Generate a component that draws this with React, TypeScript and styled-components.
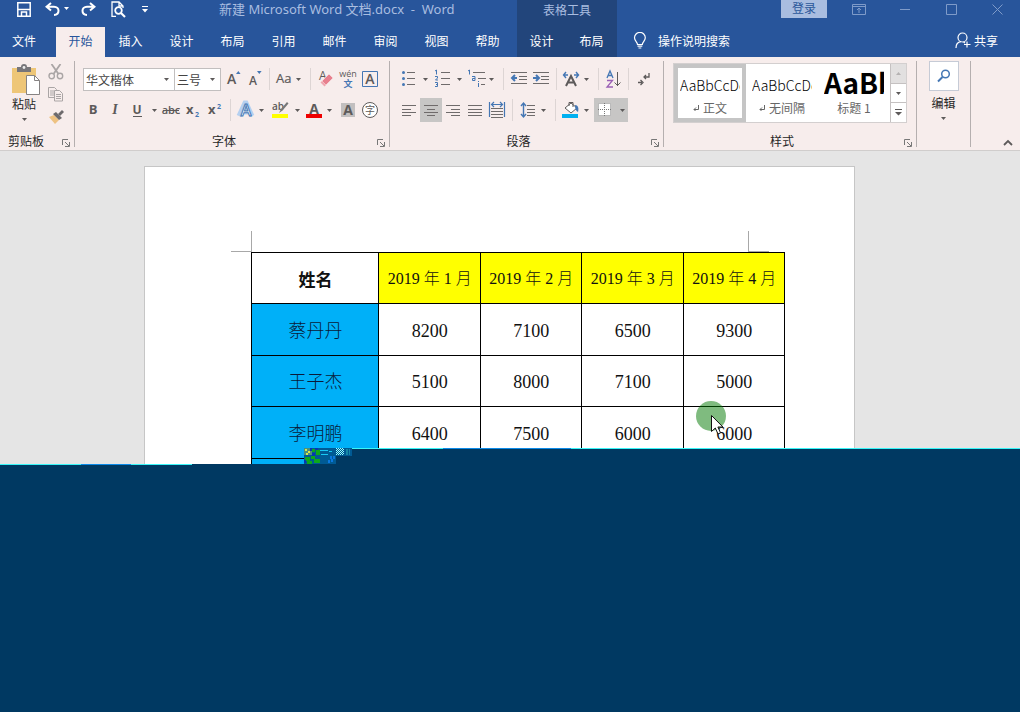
import React from "react";
import styled, { createGlobalStyle, css } from "styled-components";

const ui = `"Open Sans", "Noto Sans CJK SC", sans-serif`;
const cjk = `"Noto Sans CJK SC", sans-serif`;
const doc = `"Liberation Serif", "KaiTi", "Noto Sans CJK SC", serif`;

const c = {
  blue: "#28559b",
  deep: "#22457b",
  pale: "#a9bde0",
  ribbon: "#f7edec",
  ink: "#5d5a5a",
  accent: "#4577b4",
  navy: "#003962",
  cyan: "#38f6f8",
};

const Global = createGlobalStyle`
  * { box-sizing: border-box; }
  body { margin: 0; font-family: ${ui}; font-size: 12px; color: #262626; }
  button, input, select { font: inherit; color: inherit; background: none; border: 0; padding: 0; margin: 0; }
  button { cursor: default; }
  svg { display: block; flex: none; }
`;

const Shell = styled.div`
  min-height: 100vh;
  display: flex;
  flex-direction: column;
  overflow: hidden;
  background: ${c.navy};
`;

/* ---------- header ---------- */
const Header = styled.header`
  display: grid;
  grid-template-columns: auto auto 1fr;
  background: ${c.blue};
  color: #fff;
`;
const HeaderPart = styled.div<{ $context?: boolean; $gap?: number }>`
  display: flex;
  flex-direction: column;
  background: ${(p) => (p.$context ? c.deep : "transparent")};
  padding-right: ${(p) => p.$gap || 0}px;
`;
const TitleBar = styled.div<{ $align?: string }>`
  display: flex;
  align-items: center;
  justify-content: ${(p) => p.$align || "flex-start"};
  height: 18px;
  margin-bottom: 9px;
  white-space: nowrap;
`;
const QuickAccess = styled.div`
  display: flex;
  align-items: center;
  padding-left: 8px;
  width: 219px;
`;
const QuickButton = styled.button<{ $w: number }>`
  width: ${(p) => p.$w}px;
  height: 20px;
  display: flex;
  align-items: center;
  justify-content: center;
`;
const Title = styled.h1`
  margin: 0;
  font-size: 12px;
  font-weight: 400;
  font-family: "DejaVu Sans", ${cjk};
  font-family: "Noto Sans", ${cjk};
  font-size: 13px;
  line-height: 18px;
  color: ${c.pale};
  white-space: pre;
`;
const ContextTitle = styled.span`
  color: ${c.pale};
  font-family: ${cjk};
`;
const TabBar = styled.nav`
  display: flex;
  height: 30px;
`;
const Tab = styled.button<{ $active?: boolean; $w?: number }>`
  width: ${(p) => p.$w || 51}px;
  height: 30px;
  padding-bottom: 3px;
  font-family: ${cjk};
  text-align: center;
  ${(p) => p.$active && css`background: ${c.ribbon}; color: ${c.blue};`}
`;
const FileTab = styled(Tab)`
  padding-right: 8px;
`;
const SignIn = styled.button`
  width: 46px;
  height: 18px;
  margin-right: 9px;
  line-height: 18px;
  background: ${c.pale};
  color: #2b579a;
`;
const WindowButton = styled.button`
  width: 46px;
  height: 18px;
  display: flex;
  align-items: center;
  justify-content: center;
`;
const ToolRow = styled.div`
  display: flex;
  align-items: center;
  justify-content: space-between;
  height: 30px;
  padding: 0 22px 3px 16px;
`;
const Search = styled.label`
  display: flex;
  align-items: center;
  gap: 11px;
  input {
    width: 120px;
    outline: 0;
    font-family: ${cjk};
  }
  input::placeholder { color: #fff; opacity: 1; }
`;
const Share = styled.button`
  display: flex;
  align-items: center;
  gap: 3px;
  font-family: ${cjk};
`;

/* ---------- ribbon ---------- */
const Ribbon = styled.section`
  display: flex;
  padding: 4px 0 3px;
  background: ${c.ribbon};
  border-bottom: 1px solid #d0cdcc;
`;
const Group = styled.div<{ $w: number }>`
  position: relative;
  width: ${(p) => p.$w}px;
  height: 86px;
  display: flex;
  flex-direction: column;
  border-right: 1px solid #b5afaf;
`;
const GroupBody = styled.div<{ $pad?: number }>`
  flex: 1;
  padding-left: ${(p) => p.$pad ?? 7}px;
`;
const GroupLabel = styled.div<{ $pad?: number }>`
  height: 14px;
  line-height: 16px;
  padding-right: ${(p) => p.$pad ?? 16}px;
  text-align: center;
  font-family: ${cjk};
`;
const Launcher = styled.button`
  position: absolute;
  right: 4px;
  bottom: 0;
`;
const Row = styled.div<{ $first?: boolean }>`
  display: flex;
  align-items: center;
  height: 24px;
  margin-top: ${(p) => (p.$first ? 6 : 7)}px;
  padding-left: ${(p) => (p.$first ? 1 : 0)}px;
`;
const ParaRow = styled(Row)`
  padding-left: ${(p) => (p.$first ? 0 : 1)}px;
`;
const Combo = styled.label<{ $w: number }>`
  position: relative;
  display: flex;
  align-items: center;
  width: ${(p) => p.$w}px;
  height: 23px;
  background: #fff;
  border: 1px solid #c2bfbf;
  margin-right: ${(p) => (p.$w > 60 ? -1 : 1)}px;
  select {
    flex: 1;
    min-width: 0;
    appearance: none;
    outline: 0;
    padding-left: 2px;
    font-family: ${cjk};
    color: #444;
  }
  svg { position: absolute; right: 5px; }
`;
const Tool = styled.button<{ $on?: boolean }>`
  display: flex;
  align-items: center;
  height: 24px;
  background: ${(p) => (p.$on ? "#c7c6c5" : "transparent")};
`;
const CaretBox = styled.span<{ $tight?: boolean }>`
  width: ${(p) => (p.$tight ? 10 : 12)}px;
  display: flex;
  justify-content: ${(p) => (p.$tight ? "flex-start" : "center")};
`;
const Divider = styled.span<{ $w?: number }>`
  width: ${(p) => p.$w || 9}px;
  height: 22px;
  background: linear-gradient(#ddd5d4, #ddd5d4) center / 1px 100% no-repeat;
`;
const ClipBody = styled.div`
  flex: 1;
  display: flex;
  padding: 3px 0 0 8px;
`;
const BigButton = styled.button`
  width: 32px;
  display: flex;
  flex-direction: column;
  align-items: center;
  line-height: 16px;
  font-family: ${cjk};
  white-space: nowrap;
`;
const PasteArt = styled.span`
  height: 32px;
  margin-left: 4px;
`;
const BigCaret = styled.span`
  margin-top: 6px;
`;
const SmallStack = styled.div`
  display: flex;
  flex-direction: column;
  width: 32px;
  align-items: center;
`;
const SmallButton = styled.button<{ $h: number }>`
  height: ${(p) => p.$h}px;
  display: flex;
  align-items: flex-start;
`;
const Gallery = styled.div`
  display: flex;
  width: 234px;
  height: 60px;
  margin-top: 2px;
  background: #fff;
  border: 1px solid #d3cfcf;
`;
const StyleCard = styled.button<{ $on?: boolean }>`
  width: 72px;
  height: 58px;
  border: 4px solid ${(p) => (p.$on ? "#c5c5c5" : "#fff")};
  padding: 0 2px;
  display: flex;
  flex-direction: column;
  font-family: ${cjk};
`;
const Sample = styled.span<{ $big?: boolean }>`
  width: 60px;
  height: 32px;
  overflow: hidden;
  white-space: nowrap;
  text-align: left;
  line-height: ${(p) => (p.$big ? 28 : 34)}px;
  font-size: ${(p) => (p.$big ? 28 : 14)}px;
  font-weight: ${(p) => (p.$big ? 700 : 300)};
  color: #000;
`;
const StyleName = styled.span`
  width: 60px;
  display: flex;
  align-items: center;
  justify-content: center;
  gap: 4px;
  line-height: 16px;
  color: #666;
  white-space: nowrap;
`;
const GalleryScroll = styled.div`
  flex: 1;
  display: flex;
  flex-direction: column;
  border-left: 1px solid #c5c1c1;
`;
const ScrollButton = styled.button<{ $off?: boolean }>`
  flex: 1;
  display: flex;
  align-items: center;
  justify-content: center;
  background: ${(p) => (p.$off ? "#e2e0e0" : "#fff")};
  & + & { border-top: 1px solid #c5c1c1; }
`;
const EditBody = styled.div`
  flex: 1;
  display: flex;
  justify-content: center;
`;
const FindArt = styled.span`
  width: 30px;
  height: 30px;
  display: flex;
  align-items: center;
  justify-content: center;
  background: #fff;
  border: 1px solid #c6cbd6;
  margin-bottom: 4px;
`;
const Rest = styled.div`
  flex: 1;
  display: flex;
  align-items: flex-end;
  justify-content: flex-end;
  padding-right: 7px;
`;

/* ---------- document ---------- */
const Workspace = styled.main`
  position: relative;
  height: 313px;
  overflow: hidden;
  display: flex;
  justify-content: center;
  align-items: flex-start;
  padding: 15px 21px 0 0;
  background: #e5e5e5;
`;
const Page = styled.article`
  position: relative;
  width: 711px;
  height: 900px;
  padding: 64px 69px 0 86px;
  background: #fff;
  border: 1px solid #c6c6c6;
`;
const Margins = styled.div`
  display: flex;
  justify-content: space-between;
  width: 538px;
`;
const MarginMark = styled.span<{ $right?: boolean }>`
  width: 21px;
  height: 21px;
  border: 0 solid #a8a8a8;
  border-bottom-width: 1px;
  ${(p) => (p.$right ? "border-left-width: 1px;" : "border-right-width: 1px;")}
`;
const Sheet = styled.table`
  width: 534px;
  margin-left: 20px;
  table-layout: fixed;
  border-collapse: collapse;
  font-family: ${doc};
  font-size: 18px;
  line-height: 24px;
  color: #111;
  text-align: center;
  th, td { border: 1px solid #000; padding: 2px 2px 0 3px; height: 51px; white-space: nowrap; }
  tbody tr:nth-child(odd) > * { height: 52px; }
`;
const Month = styled.th`
  background: #ff0;
  font-size: 16px;
  font-weight: 300;
`;
const NameHead = styled.th`
  width: 127px;
  font-family: ${cjk};
  font-size: 17px;
  font-weight: 700;
`;
const Name = styled.th`
  background: #00b0f8;
  font-weight: 300;
  color: #0a1a38;
`;
const Pointer = styled.span`
  position: absolute;
  left: 551px;
  top: 234px;
`;
const BlankStep = styled.div`
  position: absolute;
  left: 304px;
  right: 0;
  bottom: 0;
  height: 16px;
  background: ${c.navy};
  overflow: hidden;
`;
const Edge = styled.div`
  display: flex;
  height: 1px;
`;
const EdgeRun = styled.span<{ $w?: number; $c: string }>`
  ${(p) => (p.$w ? `width: ${p.$w}px;` : "flex: 1;")}
  background: ${(p) => p.$c};
`;
const Noise = styled.span`
  position: absolute;
  left: 0;
  top: 0;
`;
const Blank = styled.footer`
  flex: 1;
  background: ${c.navy};
`;

/* ---------- icons ---------- */
const Caret = ({ fill = c.ink }: { fill?: string }) => (
  <svg width="5" height="3" viewBox="0 0 5 3"><path d="M0 0h5L2.500 3z" fill={fill} /></svg>
);
const Ret = () => (
  <svg width="6" height="6" viewBox="0 0 6 6" fill="none" stroke="#666"><path d="M5.500 0v4.500H1M3 2.500l-2 2 2 2" /></svg>
);
const Ico = ({ w = 22, children }: { w?: number; children: React.ReactNode }) => (
  <svg width={w} height="24" viewBox={`0 0 ${w} 24`} fill="none" fontFamily="Open Sans">{children}</svg>
);
type ToolProps = { label: string; caret?: boolean; tight?: boolean; on?: boolean; w?: number; children: React.ReactNode };
const T = ({ label, caret, tight, on, w, children }: ToolProps) => (
  <Tool aria-label={label} $on={on}>
    <Ico w={w}>{children}</Ico>
    {caret && <CaretBox $tight={tight}><Caret /></CaretBox>}
  </Tool>
);
const Launch = ({ label }: { label: string }) => (
  <Launcher aria-label={label}>
    <svg width="8" height="8" viewBox="0 0 8 8" fill="none" stroke="#777"><path d="M.5 6V.5H6" /><path d="M3 3l4 4" /><path d="M7.500 3v4.500H3" /></svg>
  </Launcher>
);
const Lines = ({ x, rows }: { x: number; rows: [number, number, number][] }) => (
  <path stroke="#6f6b6b" d={rows.map(([a, b, y]) => `M${x + a} ${y + 0.5}h${b}`).join("")} />
);

const months = ["1", "2", "3", "4"];
const people = [
  { name: "蔡丹丹", pay: [8200, 7100, 6500, 9300] },
  { name: "王子杰", pay: [5100, 8000, 7100, 5000] },
  { name: "李明鹏", pay: [6400, 7500, 6000, 6000] },
  { name: "", pay: ["", "", "", ""] },
];
const tabs = ["插入", "设计", "布局", "引用", "邮件", "审阅", "视图", "帮助"];

export default function App() {
  return (
    <Shell>
      <Global />
      <Header>
        <HeaderPart $gap={4}>
          <TitleBar>
            <QuickAccess>
              <QuickButton $w={32} aria-label="保存">
                <svg width="14" height="15" viewBox="0 0 14 15" fill="none" stroke="#fff" strokeWidth="1.500"><path d="M.8 .8h12.400v13.400H.8zM1 7.500h12M4.500 14v-4h5v4" /></svg>
              </QuickButton>
              <QuickButton $w={34} aria-label="撤消">
                <svg width="24" height="14" viewBox="0 0 24 14" fill="none" stroke="#fff" strokeWidth="2"><path d="M6 1L1.500 4.800 6 8.500M2 4.800h7c6 0 6 8 0 8.200" /><path d="M19 5h5l-2.500 3z" fill="#fff" stroke="none" /></svg>
              </QuickButton>
              <QuickButton $w={28} aria-label="恢复">
                <svg width="15" height="14" viewBox="0 0 15 14" fill="none" stroke="#fff" strokeWidth="2"><path d="M9 1l4.500 3.800L9 8.500M13 4.800H6c-6 0-6 8 0 8.200" /></svg>
              </QuickButton>
              <QuickButton $w={32} aria-label="打印预览">
                <svg width="15" height="17" viewBox="0 0 15 17" fill="none" stroke="#fff" strokeWidth="1.300"><path d="M5 15.300H1V1h7l4 4v2M8 1v4h4" /><circle cx="7.500" cy="9.500" r="3.300" strokeWidth="1.800" /><path d="M10 12l4 4" strokeWidth="2.200" /></svg>
              </QuickButton>
              <QuickButton $w={22} aria-label="自定义快速访问工具栏">
                <svg width="6" height="7" viewBox="0 0 6 7" fill="#fff"><path d="M0 0h6v1H0zM0 3h6L3 6.500z" /></svg>
              </QuickButton>
            </QuickAccess>
            <Title>新建 Microsoft Word 文档.docx  -  Word</Title>
          </TitleBar>
          <TabBar>
            <FileTab $w={56}>文件</FileTab>
            <Tab $w={49} $active>开始</Tab>
            {tabs.map((t) => <Tab key={t}>{t}</Tab>)}
          </TabBar>
        </HeaderPart>
        <HeaderPart $context>
          <TitleBar $align="center"><ContextTitle>表格工具</ContextTitle></TitleBar>
          <TabBar><Tab $w={49}>设计</Tab><Tab>布局</Tab></TabBar>
        </HeaderPart>
        <HeaderPart>
          <TitleBar $align="flex-end">
            <SignIn>登录</SignIn>
            <WindowButton aria-label="功能区显示选项">
              <svg width="14" height="11" viewBox="0 0 14 11" fill="none" stroke="#7f9bc9"><path d="M.5 .5h13v10H.5zM1 2.500h12M7 9V4M5 6l2-2 2 2" /></svg>
            </WindowButton>
            <WindowButton aria-label="最小化">
              <svg width="10" height="10" viewBox="0 0 10 10" stroke="#7f9bc9"><path d="M0 5.500h10" /></svg>
            </WindowButton>
            <WindowButton aria-label="最大化">
              <svg width="11" height="11" viewBox="0 0 11 11" fill="none" stroke="#7f9bc9"><path d="M.5 .5h10v10H.5z" /></svg>
            </WindowButton>
            <WindowButton aria-label="关闭">
              <svg width="11" height="11" viewBox="0 0 11 11" stroke="#7f9bc9"><path d="M.5 .5l10 10M10.500 .5l-10 10" /></svg>
            </WindowButton>
          </TitleBar>
          <ToolRow>
            <Search>
              <svg width="14" height="17" viewBox="0 0 14 17" fill="none" stroke="#fff" strokeWidth="1.200"><path d="M4.500 12.500c0-2.500-3-3.500-3-6.700a5.400 5.400 0 0 1 10.800 0c0 3.200-3 4.200-3 6.700zM4.500 14.200h4.800M5.500 16h2.800" /></svg>
              <input aria-label="操作说明搜索" placeholder="操作说明搜索" />
            </Search>
            <Share>
              <svg width="16" height="17" viewBox="0 0 16 17" fill="none" stroke="#fff" strokeWidth="1.200"><circle cx="7.500" cy="5.500" r="4.500" /><path d="M1 16c0-4 2-6 5-6.300M8.500 10l1.500 1M12 9.500v6M9 12.500h6.500" /></svg>
              共享
            </Share>
          </ToolRow>
        </HeaderPart>
      </Header>

      <Ribbon>
        <Group $w={75}>
          <ClipBody>
            <BigButton>
              <PasteArt>
                <svg width="28" height="31" viewBox="0 0 28 31"><path d="M0 4h24v25H0z" fill="#eec677" /><path d="M5 3h4a3 3 0 0 1 6 0h4v5H5z" fill="#77767a" /><circle cx="12" cy="3.500" r="1.400" fill="#eee" /><path d="M14.500 11.500h8l5 5v14h-13z" fill="#fff" stroke="#868383" /><path d="M22.500 11.500v5h5" fill="none" stroke="#868383" /></svg>
              </PasteArt>
              粘贴
              <BigCaret><Caret /></BigCaret>
            </BigButton>
            <SmallStack>
              <SmallButton $h={23} aria-label="剪切">
                <svg width="16" height="16" viewBox="0 0 16 16" fill="none" stroke="#aaa5a5" strokeWidth="1.400"><path d="M3.500 0l7 10M12.500 0l-7 10" strokeWidth="1.800" /><circle cx="3.700" cy="12" r="2.700" /><circle cx="12" cy="12" r="2.700" /></svg>
              </SmallButton>
              <SmallButton $h={23} aria-label="复制">
                <svg width="16" height="15" viewBox="0 0 16 15" fill="#f7edec" stroke="#aaa5a5"><path d="M.5 .5h6l2 2v8h-8zM2 4h4M2 6h4M2 8h4" /><path d="M6.500 3.500h5l3 3v7.500h-8zM8 7.500h5M8 9.500h5M8 11.500h5" /></svg>
              </SmallButton>
              <SmallButton $h={16} aria-label="格式刷">
                <svg width="16" height="14" viewBox="0 0 16 14"><path d="M1 7l5-2 5 5-4 4z" fill="#eec282" /><path d="M5 4l3-2 6 6-3 2z" fill="#6d6a6c" /><path d="M10 4l4-4 2 2-4 4z" fill="#6d6a6c" /></svg>
              </SmallButton>
            </SmallStack>
          </ClipBody>
          <GroupLabel $pad={22}>剪贴板</GroupLabel>
          <Launch label="剪贴板选项" />
        </Group>

        <Group $w={315}>
          <GroupBody>
            <Row $first>
              <Combo $w={92}><select aria-label="字体"><option>华文楷体</option></select><Caret /></Combo>
              <Combo $w={47}><select aria-label="字号"><option>三号</option></select><Caret /></Combo>
              <T label="增大字号"><text x="5" y="17" fontSize="14" fontWeight="600" fill={c.ink}>A</text><path d="M14 7l2.300-3 2.300 3z" fill={c.accent} /></T>
              <T label="减小字号"><text x="5" y="18" fontSize="12" fontWeight="600" fill={c.ink}>A</text><path d="M13 4h4.600l-2.300 3z" fill={c.accent} /></T>
              <Divider $w={6} />
              <T label="更改大小写" caret tight w={24}><text x="4" y="16" fontSize="13" fill={c.ink} stroke={c.ink} strokeWidth=".2">Aa</text></T>
              <Divider />
              <T label="清除所有格式"><text x="4" y="13" fontSize="12" fill={c.ink}>A</text><path d="M7 14l7-7 4 4-7 7z" fill="#e8808e" stroke="#f7edec" strokeWidth=".6" /><path d="M7 14l4 4-1.500 1.500-4-4z" fill="#efa5ae" /></T>
              <T label="拼音指南"><text x="11" y="10" fontSize="9" fill={c.ink} textAnchor="middle">wén</text><text x="11" y="20" fontSize="9" fontWeight="700" fontFamily="Noto Sans CJK SC" fill={c.accent} textAnchor="middle">文</text></T>
              <T label="字符边框"><path d="M3.500 4.500h15v15h-15z" stroke={c.accent} /><text x="11" y="17" fontSize="14" fontWeight="600" fill={c.ink} textAnchor="middle">A</text></T>
            </Row>
            <Row>
              <T label="加粗"><text x="11" y="16" fontSize="13" fontWeight="700" fill={c.ink} textAnchor="middle">B</text></T>
              <T label="倾斜"><text x="11" y="16" fontSize="14" fontWeight="600" fontStyle="italic" fontFamily="Liberation Serif" fill={c.ink} textAnchor="middle">I</text></T>
              <T label="下划线" caret><text x="11" y="16" fontSize="12" fontWeight="700" fill={c.ink} textAnchor="middle">U</text><path d="M7 18.500h9" stroke={c.ink} /></T>
              <T label="删除线"><text x="11" y="16" fontSize="11" fontWeight="600" fill={c.ink} textAnchor="middle">abc</text><path d="M3 12.500h16" stroke={c.ink} /></T>
              <T label="下标"><text x="4" y="16" fontSize="13" fontWeight="700" fill={c.ink}>x</text><text x="13" y="19" fontSize="7" fontWeight="700" fill={c.accent}>2</text></T>
              <T label="上标"><text x="4" y="16" fontSize="13" fontWeight="700" fill={c.ink}>x</text><text x="13" y="11" fontSize="7" fontWeight="700" fill={c.accent}>2</text></T>
              <Divider />
              <T label="文本效果" caret tight w={24}><path d="M4 18L10 5h1l6 13M7 14h7" stroke="#b5d0f0" strokeWidth="5" /><text x="11" y="18" fontSize="16" fontWeight="600" fill="#fff" stroke={c.accent} strokeWidth="1" textAnchor="middle">A</text></T>
              <T label="文本突出显示颜色" caret><text x="3" y="12" fontSize="10" fontWeight="600" fill={c.ink}>ab</text><path d="M10 15l2-4 6-7 1.500 1.500-6 7z" fill="#777" /><path d="M3 16h16v4H3z" fill="#ff0" /></T>
              <T label="字体颜色" caret tight w={24}><text x="11" y="16" fontSize="14" fontWeight="700" fill={c.ink} textAnchor="middle">A</text><path d="M3 16h16v4H3z" fill="#e00" /></T>
              <T label="字符底纹"><path d="M4 5h14v14H4z" fill="#c2bfbf" /><text x="11" y="17" fontSize="14" fontWeight="700" fill={c.ink} textAnchor="middle">A</text></T>
              <T label="带圈字符"><circle cx="11" cy="12" r="7.500" stroke={c.ink} fill="#fff" /><text x="11" y="16" fontSize="10" fontFamily="Noto Sans CJK SC" fill={c.ink} textAnchor="middle">字</text></T>
            </Row>
          </GroupBody>
          <GroupLabel>字体</GroupLabel>
          <Launch label="字体选项" />
        </Group>

        <Group $w={274}>
          <GroupBody>
            <ParaRow $first>
              <T label="项目符号" caret><g fill={c.accent}><circle cx="6.500" cy="5.500" r="1.500" /><circle cx="6.500" cy="11.500" r="1.500" /><circle cx="6.500" cy="17.500" r="1.500" /></g><Lines x={10} rows={[[0, 8, 5], [0, 8, 11], [0, 8, 17]]} /></T>
              <T label="编号" caret><path d="M4 4l1.500-1v4.500M4 9.500h2.500v1.500L4.500 13H7M4 15.500h2.500v4H4M5 17.500h1.500" stroke={c.accent} /><Lines x={10} rows={[[0, 9, 5], [0, 9, 11], [0, 9, 17]]} /></T>
              <T label="多级列表" caret tight w={24}><path d="M3 4l1.500-1v4.500M7 9.500h3v4H7.500v-2H10M13.500 14v1M13.500 16v4" stroke={c.accent} /><Lines x={8} rows={[[0, 12, 5], [5, 8, 11], [8, 4, 17]]} /></T>
              <Divider />
              <T label="减少缩进量"><Lines x={3} rows={[[0, 16, 5], [8, 8, 9], [8, 8, 12], [0, 16, 16]]} /><path d="M9 11H4M7 8l-3 3 3 3" stroke={c.accent} strokeWidth="2" /></T>
              <T label="增加缩进量"><Lines x={3} rows={[[0, 16, 5], [8, 8, 9], [8, 8, 12], [0, 16, 16]]} /><path d="M3 11h5M6 8l3 3-3 3" stroke={c.accent} strokeWidth="2" /></T>
              <Divider $w={8} />
              <T label="中文版式" caret tight w={24}><path d="M6 5L3.500 8 6 11M4 8h4M16 5l2.500 3L16 11M18 8h-4" stroke={c.accent} strokeWidth="1.400" /><path d="M6 19l5-10 5 10M8 15.500h6" stroke={c.ink} strokeWidth="2" /></T>
              <Divider $w={8} />
              <T label="排序"><path d="M5 11l3-7 3 7M6 8.500h4" stroke={c.accent} strokeWidth="1.300" /><path d="M5 13.500h5.500L5 20h6" stroke="#9a5fb5" strokeWidth="1.300" /><path d="M15.500 5v14M12.500 15.500l3 3 3-3" stroke={c.ink} /></T>
              <Divider $w={8} />
              <T label="显示编辑标记"><path d="M17 6v4h-5M14 8l-2 2 2 2M6 15.500h4M8.500 13l2.500 2.500L8.500 18" stroke={c.ink} strokeWidth="1.300" /></T>
            </ParaRow>
            <ParaRow>
              <T label="左对齐"><Lines x={4} rows={[[0, 14, 7], [0, 9, 11], [0, 14, 14], [0, 9, 17]]} /></T>
              <T label="居中" on><Lines x={4} rows={[[0, 14, 7], [3, 8, 11], [0, 14, 14], [3, 8, 17]]} /></T>
              <T label="右对齐"><Lines x={4} rows={[[0, 14, 7], [5, 9, 11], [0, 14, 14], [5, 9, 17]]} /></T>
              <T label="两端对齐"><Lines x={4} rows={[[0, 14, 7], [0, 14, 11], [0, 14, 14], [0, 14, 17]]} /></T>
              <T label="分散对齐"><path d="M3.500 4v15M18.500 4v15M5 6.500h12M8 4L5.500 6.500 8 9M14 4l2.500 2.500L14 9" stroke={c.accent} strokeWidth="1.200" /><Lines x={5} rows={[[0, 12, 10], [0, 12, 13], [0, 12, 16], [0, 12, 19]]} /></T>
              <Divider />
              <T label="行距" caret tight w={24}><path d="M6.500 5v14M4 8l2.500-3L9 8M4 16l2.500 3L9 16" stroke={c.accent} strokeWidth="1.400" /><Lines x={10} rows={[[0, 8, 7], [0, 8, 11], [0, 8, 14], [0, 8, 17]]} /></T>
              <Divider />
              <T label="底纹" caret tight w={24}><path d="M5 10l6-5 6 5-6 5z" fill="#fff" stroke={c.ink} /><path d="M9 8V4.500h4V9" stroke={c.ink} /><path d="M15 7c3 0 4 3 3 7-2-1-3-3-3-7z" fill={c.accent} /><path d="M2 16h16v4H2z" fill="#00b0f0" /></T>
              <T label="边框" caret on><path d="M4 5h13v13H4z" fill="#fff" /><path d="M4.500 5.500h12v12h-12zM10.500 5v13M4 11.500h13" stroke="#777" strokeDasharray="1 1" /></T>
            </ParaRow>
          </GroupBody>
          <GroupLabel>段落</GroupLabel>
          <Launch label="段落设置" />
        </Group>

        <Group $w={253}>
          <GroupBody $pad={9}>
            <Gallery>
              <StyleCard $on><Sample>AaBbCcDd</Sample><StyleName><Ret />正文</StyleName></StyleCard>
              <StyleCard><Sample>AaBbCcDd</Sample><StyleName><Ret />无间隔</StyleName></StyleCard>
              <StyleCard><Sample $big>AaBb</Sample><StyleName>标题 1</StyleName></StyleCard>
              <GalleryScroll>
                <ScrollButton $off aria-label="上一行"><svg width="5" height="3" viewBox="0 0 5 3"><path d="M0 3h5L2.500 0z" fill="#b5b2b2" /></svg></ScrollButton>
                <ScrollButton aria-label="下一行"><Caret /></ScrollButton>
                <ScrollButton aria-label="其他"><svg width="7" height="7" viewBox="0 0 7 7" fill={c.ink}><path d="M0 0h7v1H0zM0 3h7L3.500 6.500z" /></svg></ScrollButton>
              </GalleryScroll>
            </Gallery>
          </GroupBody>
          <GroupLabel>样式</GroupLabel>
          <Launch label="样式选项" />
        </Group>

        <Group $w={54}>
          <EditBody>
            <BigButton>
              <FindArt>
                <svg width="14" height="14" viewBox="0 0 14 14" fill="none" stroke={c.accent} strokeWidth="1.500"><circle cx="8.500" cy="5" r="3.800" /><path d="M5.500 8L1 12.500" strokeWidth="2" /></svg>
              </FindArt>
              编辑
              <BigCaret><Caret /></BigCaret>
            </BigButton>
          </EditBody>
        </Group>
        <Rest>
          <button aria-label="折叠功能区">
            <svg width="10" height="8" viewBox="0 0 10 8" fill="none" stroke={c.ink} strokeWidth="1.800"><path d="M1 6l4-4 4 4" /></svg>
          </button>
        </Rest>
      </Ribbon>

      <Workspace>
        <Page>
          <Margins><MarginMark /><MarginMark $right /></Margins>
          <Sheet>
            <thead>
              <tr>
                <NameHead>姓名</NameHead>
                {months.map((m) => <Month key={m}>2019 年 {m} 月</Month>)}
              </tr>
            </thead>
            <tbody>
              {people.map((p, i) => (
                <tr key={i}>
                  <Name scope="row">{p.name}</Name>
                  {p.pay.map((v, j) => <td key={j}>{v}</td>)}
                </tr>
              ))}
            </tbody>
          </Sheet>
          <Pointer>
            <svg width="34" height="36" viewBox="0 0 34 36"><circle cx="15" cy="15" r="15" fill="rgba(0,120,0,.5)" /><path d="M15.500 14.500v16l3.800-3.500 2.700 6 2.500-1.200-2.600-5.800h5z" fill="#fff" stroke="#111" /></svg>
          </Pointer>
        </Page>
        <BlankStep>
          <Edge>
            <EdgeRun $w={139} $c={c.cyan} />
            <EdgeRun $w={128} $c="#0a8ae8" />
            <EdgeRun $c={c.cyan} />
          </Edge>
          <Noise>
            <svg width="48" height="16" viewBox="0 0 48 16" shapeRendering="crispEdges">
              <path d="M0 0h48v8H32v8H0z" fill="#005a94" />
              <path d="M0 0h8v7H0z" fill="#4c8f7c" />
              <path d="M1 1h2v2H1zM4 3h2v2H4zM2 5h2v2H2z" fill="#d8ea4a" />
              <path d="M8 1h3v3H8zM12 2h4v5h-4zM1 9h5v4H1zM7 8h4v3H7zM3 13h5v3H3zM10 11h6v4h-6z" fill="#0da81c" />
              <path d="M6 0h2v3H6zM11 0h3v2h-3zM8 5h3v3H8zM0 12h2v3H0z" fill="#0838b0" />
              <path d="M16 2h8v1h-8zM17 6h7v1h-7zM25 3h3v1h-3z" fill="#18c8f4" />
              <path d="M26 8h2v3h-2zM29 8h2v3h-2zM24 12h2v3h-2zM27 11h2v3h-2z" fill="#0a78e0" />
              <path d="M32 .5h8M32 2.500h8M32 4.500h8M32 6.500h8" stroke="#9ff" strokeDasharray="1 1" />
              <path d="M33 1.500h8M33 3.500h8M33 5.500h8" stroke="#9ff" strokeDasharray="1 1" />
              <path d="M42 1h2v6h-2zM45 1h1v6h-1z" fill="#1689a5" />
            </svg>
          </Noise>
        </BlankStep>
      </Workspace>
      <Blank>
        <Edge>
          <EdgeRun $w={81} $c={c.cyan} />
          <EdgeRun $w={50} $c="#0a8ae8" />
          <EdgeRun $w={61} $c={c.cyan} />
          <EdgeRun $c={c.navy} />
        </Edge>
      </Blank>
    </Shell>
  );
}
